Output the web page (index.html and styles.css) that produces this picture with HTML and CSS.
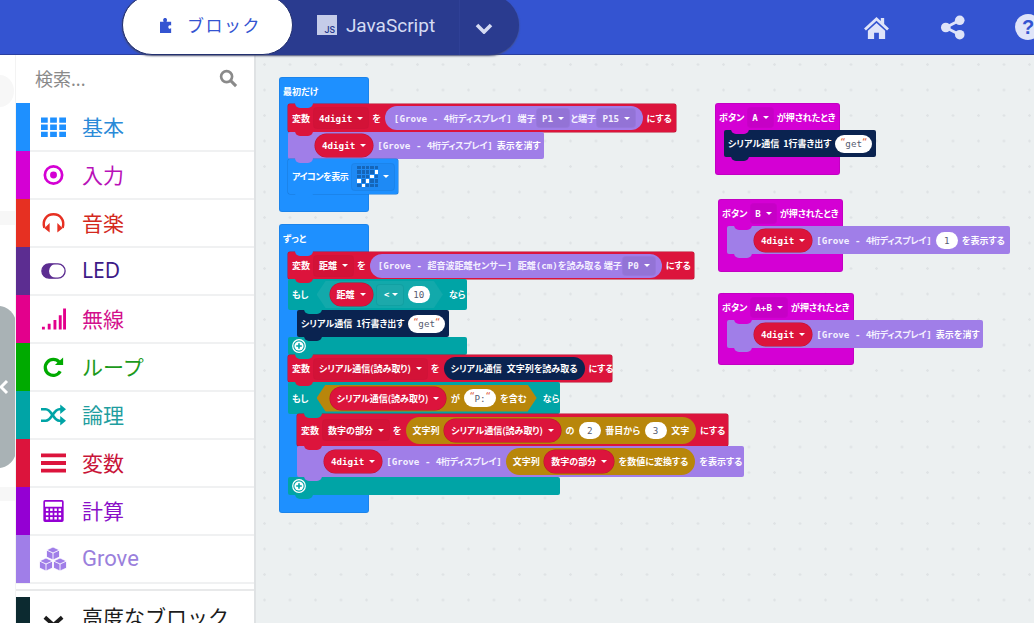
FILE: index.html
```html
<!DOCTYPE html>
<html lang="ja">
<head>
    <meta charset="UTF-8">
    <title>MakeCode ブロック</title>
    <link rel="stylesheet" href="styles.css">
</head>
<body>
    <header class="topbar">
        <div class="toggle">
            <div class="toggle-on">
                <svg class="puzzle" viewBox="0 0 14 16"><path d="M0 4h4C3 2.500 3.200 0 5.500 0S8 2.500 7 4h5v4c-2-1-3 0-3 1.500S10 12 12 11v5H0z"/></svg>
                <span>ブロック</span>
            </div>
            <div class="toggle-off">
                <span class="js-badge">JS</span>
                <span>JavaScript</span>
            </div>
            <div class="toggle-more">
                <svg viewBox="0 0 18 12"><path d="M2 3l7 7 7-7" fill="none" stroke="currentColor" stroke-width="3.600"/></svg>
            </div>
        </div>
        <div class="top-icons">
            <svg class="top-icon" viewBox="0 0 28 24"><path d="M14 1L1 13l2 2L14 5l11 10 2-2-5-4.600V2h-3.500v3.200zM5 15.500V24h6.500v-6.500h5V24H23v-8.500L14 7.200z"/></svg>
            <svg class="top-icon" viewBox="0 0 26 26"><circle cx="20" cy="5.500" r="5"/><circle cx="5.500" cy="13" r="5"/><circle cx="20" cy="20.500" r="5"/><path d="M5.500 13L20 5.500M5.500 13L20 20.500" stroke="currentColor" stroke-width="3"/></svg>
            <div class="help">?</div>
        </div>
    </header>

    <div class="main">
        <div class="edge">
            <div class="ghost ghost-a"></div>
            <div class="ghost ghost-b"></div>
            <div class="ghost ghost-c"></div>
            <div class="collapse">
                <svg viewBox="0 0 10 16"><path d="M8 2L2 8l6 6" fill="none" stroke="#fff" stroke-width="3"/></svg>
            </div>
        </div>

        <aside class="toolbox">
            <div class="search">
                <span>検索...</span>
                <svg viewBox="0 0 20 20"><circle cx="8" cy="8" r="5.800" fill="none" stroke="currentColor" stroke-width="2.800"/><path d="M12.500 12.500L18 18" stroke="currentColor" stroke-width="3.200"/></svg>
            </div>
            <div class="cat c-basic">
                <i></i>
                <svg viewBox="0 0 26 22"><path d="M0 1h7v5.500H0zM9.500 1h7v5.500h-7zM19 1h7v5.500h-7zM0 8.500h7V14H0zM9.500 8.500h7V14h-7zM19 8.500h7V14h-7zM0 16h7v5.500H0zM9.500 16h7v5.500h-7zM19 16h7v5.500h-7z"/></svg>
                <span>基本</span>
            </div>
            <div class="cat c-input">
                <i></i>
                <svg viewBox="0 0 26 22"><circle cx="13" cy="11" r="9" fill="none" stroke="currentColor" stroke-width="2.800"/><circle cx="13" cy="11" r="3.600"/></svg>
                <span>入力</span>
            </div>
            <div class="cat c-music">
                <i></i>
                <svg viewBox="0 0 26 22"><path d="M3.500 16C1 8 6 2 13 2s12 6 9.500 14" fill="none" stroke="currentColor" stroke-width="2.600"/><path d="M9 11v10L3.500 16.500zM17 11v10l5.500-4.500z"/></svg>
                <span>音楽</span>
            </div>
            <div class="cat c-led">
                <i></i>
                <svg viewBox="0 0 28 18"><rect x="1" y="1" width="26" height="16" rx="8" fill="#fff" stroke="currentColor" stroke-width="1.500"/><path d="M9 1a8 8 0 0 0 0 16h8a8 8 0 0 1 0-16z"/></svg>
                <span>LED</span>
            </div>
            <div class="cat c-radio">
                <i></i>
                <svg viewBox="0 0 26 22"><path d="M1 19h3v3H1zM7 16h3v6H7zM13 12h3v10h-3zM18.500 7h3v15h-3zM23 0h3v22h-3z"/></svg>
                <span>無線</span>
            </div>
            <div class="cat c-loop">
                <i></i>
                <svg viewBox="0 0 26 22"><path d="M20 15.500A8.300 8.300 0 1 1 19 6" fill="none" stroke="currentColor" stroke-width="3.400"/><path d="M14.500 9H23V1z"/></svg>
                <span>ループ</span>
            </div>
            <div class="cat c-logic">
                <i></i>
                <svg viewBox="0 0 26 22"><path d="M0 5h5c6 0 8 12 14 12h2M0 17h5c6 0 8-12 14-12h2" fill="none" stroke="currentColor" stroke-width="2.800"/><path d="M20 0l6 5-6 5zM20 12l6 5-6 5z"/></svg>
                <span>論理</span>
            </div>
            <div class="cat c-var">
                <i></i>
                <svg viewBox="0 0 26 22"><path d="M0 1h26v4H0zM0 9h26v4H0zM0 17h26v4H0z"/></svg>
                <span>変数</span>
            </div>
            <div class="cat c-math">
                <i></i>
                <svg viewBox="0 0 24 26"><path fill-rule="evenodd" d="M2 0h20a2 2 0 0 1 2 2v22a2 2 0 0 1-2 2H2a2 2 0 0 1-2-2V2a2 2 0 0 1 2-2zM2 2v6h20V2zM3 10v3h3v-3zM8 10v3h3v-3zM13 10v3h3v-3zM18 10v3h3v-3zM3 15v3h3v-3zM8 15v3h3v-3zM13 15v3h3v-3zM18 15v3h3v-3zM3 20v3h3v-3zM8 20v3h3v-3zM13 20v3h3v-3zM18 20v3h3v-3z"/></svg>
                <span>計算</span>
            </div>
            <div class="cat c-grove">
                <i></i>
                <svg class="wide" viewBox="0 0 30 26"><path d="M15 1l6.500 3v7L15 14l-6.500-3V4zM8 12l6.500 3v7L8 25l-6.500-3v-7zM22 12l6.500 3v7L22 25l-6.500-3v-7z" stroke="#fff" stroke-width=".8"/><path d="M8.500 4l6.500 3 6.500-3M1.500 15L8 18l6.500-3M15.500 15l6.500 3 6.500-3M15 7v7M8 18v7M22 18v7" fill="none" stroke="#fff" stroke-width=".9"/></svg>
                <span>Grove</span>
            </div>
            <div class="advanced">
                <i></i>
                <svg viewBox="0 0 26 22"><path d="M4 4l9 8 9-8" fill="none" stroke="currentColor" stroke-width="4"/></svg>
                <span>高度なブロック</span>
            </div>
        </aside>

        <section class="workspace">
            <!-- 最初だけ -->
            <div class="hat hat-blue stack-start">
                <div class="hat-title">最初だけ</div>
                <div class="blk red w-r1">
                    <span>変数</span><b class="drop mono">4digit<u></u></b><span>を</span>
                    <b class="pill purple-pill mono">[Grove - <em>4桁ディスプレイ</em>] <em>端子</em> <b class="drop-in">P1<u></u></b> <em>と端子</em> <b class="drop-in">P15<u></u></b></b>
                    <span>にする</span>
                </div>
                <div class="blk purple w-r2 pad-left">
                    <b class="pill red-pill mono">4digit<u></u></b><span class="mono soft">[Grove - <em>4桁ディスプレイ</em>]</span><span>表示を消す</span>
                </div>
                <div class="blk blue tall w-r3">
                    <span class="icon-label">アイコンを表示</span>
                    <div class="icon-field">
                        <div class="matrix">
                            <s></s><s></s><s></s><s></s><s></s>
                            <s></s><s></s><s></s><s></s><s class="on"></s>
                            <s></s><s></s><s></s><s class="on"></s><s></s>
                            <s class="on"></s><s></s><s class="on"></s><s></s><s></s>
                            <s></s><s class="on"></s><s></s><s></s><s></s>
                        </div>
                        <u></u>
                    </div>
                </div>
            </div>

            <!-- ずっと -->
            <div class="hat hat-blue stack-forever">
                <div class="hat-title title-forever">ずっと</div>
                <div class="blk red w-f1">
                    <span>変数</span><b class="drop">距離<u></u></b><span>を</span>
                    <b class="pill purple-pill mono">[Grove - <em>超音波距離センサー</em>] <em>距離</em>(cm)<em>を読み取る 端子</em> <b class="drop-in">P0<u></u></b></b>
                    <span>にする</span>
                </div>
                <div class="blk teal head w-f2">
                    <span>もし</span>
                    <div class="hex hex-teal">
                        <b class="pill red-pill">距離<u></u></b><b class="drop-teal">&lt;<u></u></b><b class="num mono">10</b>
                    </div>
                    <span class="then">なら</span>
                </div>
                <div class="blk navy inner w-f3">
                    <span>シリアル通信</span><span>1行書き出す</span><b class="str mono"><q></q>get<q></q></b>
                </div>
                <div class="blk teal foot w-f2">
                    <svg class="plus" viewBox="0 0 14 14"><circle cx="7" cy="7" r="6.300" fill="none" stroke="#fff" stroke-width="1.200"/><circle cx="7" cy="7" r="4.600" fill="#fff"/><path d="M7 4.200v5.600M4.200 7h5.600" stroke="#00a4a6" stroke-width="1.600"/></svg>
                </div>
                <div class="blk red w-f4">
                    <span>変数</span><b class="drop">シリアル通信(読み取り)<u></u></b><span>を</span>
                    <b class="pill navy-pill"><span>シリアル通信</span><span>文字列を読み取る</span></b>
                    <span>にする</span>
                </div>
                <div class="blk teal head head2 w-f5">
                    <span>もし</span>
                    <div class="hex hex-gold">
                        <b class="pill red-pill">シリアル通信(読み取り)<u></u></b><span>が</span><b class="str mono"><q></q>P:<q></q></b><span>を含む</span>
                    </div>
                    <span class="then">なら</span>
                </div>
                <div class="blk red inner w-f6">
                    <span>変数</span><b class="drop">数字の部分<u></u></b><span>を</span>
                    <b class="pill gold-pill">文字列<b class="pill red-pill">シリアル通信(読み取り)<u></u></b><span>の</span><b class="num mono">2</b><span>番目から</span><b class="num mono">3</b><span>文字</span></b>
                    <span>にする</span>
                </div>
                <div class="blk purple inner w-f7 pad-left">
                    <b class="pill red-pill mono">4digit<u></u></b><span class="mono soft">[Grove - <em>4桁ディスプレイ</em>]</span>
                    <b class="pill gold-pill">文字列<b class="pill red-pill">数字の部分<u></u></b><span>を数値に変換する</span></b>
                    <span class="show">を表示する</span>
                </div>
                <div class="blk teal foot w-f5">
                    <svg class="plus" viewBox="0 0 14 14"><circle cx="7" cy="7" r="6.300" fill="none" stroke="#fff" stroke-width="1.200"/><circle cx="7" cy="7" r="4.600" fill="#fff"/><path d="M7 4.200v5.600M4.200 7h5.600" stroke="#00a4a6" stroke-width="1.600"/></svg>
                </div>
            </div>

            <!-- ボタン -->
            <div class="hat hat-pink stack-a">
                <div class="hat-title"><span>ボタン</span><b class="drop-pink mono">A<u></u></b><span>が押されたとき</span></div>
                <div class="blk navy w-a">
                    <span>シリアル通信</span><span>1行書き出す</span><b class="str mono"><q></q>get<q></q></b>
                </div>
            </div>
            <div class="hat hat-pink stack-b">
                <div class="hat-title"><span>ボタン</span><b class="drop-pink mono">B<u></u></b><span>が押されたとき</span></div>
                <div class="blk purple w-b pad-left">
                    <b class="pill red-pill mono">4digit<u></u></b><span class="mono soft">[Grove - <em>4桁ディスプレイ</em>]</span><b class="num mono">1</b><span>を表示する</span>
                </div>
            </div>
            <div class="hat hat-pink stack-ab">
                <div class="hat-title"><span>ボタン</span><b class="drop-pink mono">A+B<u></u></b><span>が押されたとき</span></div>
                <div class="blk purple w-ab pad-left">
                    <b class="pill red-pill mono">4digit<u></u></b><span class="mono soft">[Grove - <em>4桁ディスプレイ</em>]</span><span>表示を消す</span>
                </div>
            </div>
        </section>
    </div>
</body>
</html>
```

FILE: styles.css
```css
* {
    box-sizing: border-box;
}
html, body {
    margin: 0;
    height: 623px;
    overflow: hidden;
}
body {
    width: 1034px;
    font-family: "Noto Sans", "Noto Sans CJK JP", sans-serif;
    background-color: #fff;
    display: flex;
    flex-direction: column;
}

/* header */
.topbar {
    height: 55px;
    flex: none;
    background-color: #3454d1;
    border-bottom: 1px solid #2a3f9f;
    display: flex;
    justify-content: space-between;
    position: relative;
    z-index: 3;
}
.toggle {
    width: 397px;
    height: 60px;
    margin: -5px 0 0 122px;
    background-color: #2a3b8f;
    border-radius: 30px;
    box-shadow: 0 1px 2px #444b70;
    display: flex;
    align-items: center;
    color: #d5dbf3;
}
.toggle-on {
    width: 171px;
    height: 60px;
    padding-left: 6px;
    background-color: #fff;
    color: #3454d1;
    border: 1px solid #22306f;
    border-radius: 30px;
    display: flex;
    align-items: center;
    justify-content: center;
    gap: 14px;
    font-size: 17px;
    letter-spacing: 1.500px;
}
.toggle-on span {
    margin-top: -2px;
}
.puzzle {
    width: 13px;
    height: 15px;
    fill: #3454d1;
}
.toggle-off {
    width: 166px;
    display: flex;
    align-items: center;
    justify-content: center;
    gap: 9px;
    font-family: Roboto, sans-serif;
    font-size: 19px;
}
.js-badge {
    width: 20px;
    height: 20px;
    background-color: #c5cce9;
    color: #2a3b8f;
    font-size: 9px;
    font-weight: 500;
    display: flex;
    align-items: flex-end;
    justify-content: flex-end;
    padding-right: 2px;
}
.toggle-more {
    flex: 1;
    height: 60px;
    border-left: 1px solid #2f4096;
    display: flex;
    align-items: center;
    padding: 6px 0 0 15px;
}
.toggle-more svg {
    width: 18px;
    height: 12px;
}
.top-icons {
    width: 171px;
    display: flex;
    align-items: center;
    color: #dfe4f9;
    gap: 50px;
    overflow: hidden;
}
.top-icon {
    flex: none;
    fill: currentColor;
}
.top-icon:nth-child(1) {
    width: 27px;
    height: 23px;
}
.top-icon:nth-child(2) {
    width: 26px;
    height: 25px;
}
.help {
    flex: none;
    width: 26px;
    height: 26px;
    border-radius: 50%;
    background-color: #dfe4f9;
    color: #3454d1;
    font-family: "Liberation Sans", sans-serif;
    font-weight: bold;
    font-size: 20px;
    line-height: 26px;
    text-align: center;
    margin-left: -1px;
}

/* main area */
.main {
    flex: 1;
    display: flex;
    min-height: 0;
}
.edge {
    width: 16px;
    flex: none;
    position: relative;
    background-color: #fff;
    overflow: hidden;
    border-right: 1px solid #f3f3f3;
}
.ghost {
    position: absolute;
    background-color: #f7f7f7;
}
.ghost-a {
    left: -14px;
    top: 20px;
    width: 28px;
    height: 32px;
    border-radius: 50%;
}
.ghost-b {
    left: 0;
    top: 156px;
    width: 15px;
    height: 14px;
}
.ghost-c {
    left: 0;
    top: 432px;
    width: 15px;
    height: 14px;
}
.collapse {
    position: absolute;
    left: -20px;
    top: 251px;
    width: 36px;
    height: 162px;
    background-color: #a9b2b5;
    border-radius: 0 18px 18px 0;
}
.collapse svg {
    position: absolute;
    left: 19px;
    top: 73px;
    width: 10px;
    height: 16px;
}

/* toolbox */
.toolbox {
    width: 240px;
    flex: none;
    background-color: #fff;
    border-right: 2px solid #dfe2e4;
    overflow: hidden;
}
.search {
    height: 49px;
    display: flex;
    align-items: center;
    justify-content: space-between;
    padding: 0 16px 3px 19px;
    color: #8a8a8a;
    font-size: 18px;
}
.search svg {
    width: 19px;
    height: 19px;
    fill: currentColor;
}
.cat {
    height: 48px;
    display: flex;
    align-items: center;
    border-bottom: 2px solid #f0f1f2;
    color: var(--cat);
    font-size: 21px;
}
.cat span {
    margin-top: -2px;
}
.cat i, .advanced i {
    width: 14px;
    height: 48px;
    flex: none;
    background-color: var(--cat);
}
.cat svg, .advanced svg {
    width: 25px;
    height: 22px;
    margin: 0 16px 0 11px;
    flex: none;
    fill: currentColor;
}
.cat svg.wide {
    width: 30px;
    height: 26px;
    margin: 0 14px 0 8px;
}
.c-basic { --cat: #1e90ff; }
.c-input { --cat: #d400d4; }
.c-music { --cat: #e63022; }
.c-led { --cat: #5c2d91; }
.c-radio { --cat: #e3008c; }
.c-loop { --cat: #00aa00; }
.c-logic { --cat: #00a4a6; }
.c-var { --cat: #dc143c; }
.c-math { --cat: #9400d3; }
.c-grove { --cat: #a07ee8; }
.c-led span { color: #3d1a87; }
.c-basic span { color: #2a8ad8; }
.c-input span { color: #b811b8; }
.c-music span { color: #d3281c; }
.c-radio span { color: #d3108c; }
.c-loop span { color: #1c9a1c; }
.c-logic span { color: #1f9ea0; }
.c-var span { color: #c81438; }
.c-math span { color: #8a10c8; }
.c-grove span { color: #9a80dc; font-family: Roboto, sans-serif; font-size: 22px; }
.advanced {
    height: 50px;
    margin-top: 5px;
    border-top: 2px solid #e8e9ea;
    padding-top: 6px;
    display: flex;
    align-items: flex-start;
    color: #1c1c1c;
    font-size: 21px;
    line-height: 30px;
}
.advanced i {
    --cat: #0c2a30;
}
.advanced svg {
    margin-top: 16px;
}
.advanced span {
    margin-top: 5px;
}

/* workspace */
.workspace {
    flex: 1;
    position: relative;
    overflow: hidden;
    background-color: #ecf0f1;
    background-image: radial-gradient(circle at 1.500px 1.500px, #dfe3e5 1px, transparent 1.500px);
    background-size: 25.500px 25.500px;
    background-position: 7px 8px;
}

/* blocks */
.hat {
    position: absolute;
    border-radius: 3px;
    border: 1px solid rgba(0, 0, 0, .08);
}
.hat-blue {
    background-color: #1e90ff;
    width: 90px;
}
.hat-pink {
    background-color: #d400d4;
}
.stack-start {
    left: 23px;
    top: 22px;
    height: 135px;
}
.stack-forever {
    left: 23px;
    top: 169px;
    height: 289px;
}
.stack-a {
    left: 459px;
    top: 48px;
    width: 125px;
    height: 72px;
}
.stack-b {
    left: 462px;
    top: 144px;
    width: 125px;
    height: 73px;
}
.stack-ab {
    left: 462px;
    top: 238px;
    width: 136px;
    height: 72px;
}
.hat-title {
    position: relative;
    height: 26px;
    padding-left: 3px;
    display: flex;
    align-items: center;
    gap: 4px;
    color: #fff;
    font-family: "Noto Sans CJK JP", sans-serif;
    font-feature-settings: "palt";
    font-size: 9px;
    font-weight: 700;
    white-space: nowrap;
}
.title-forever {
    height: 27px;
}
.hat-title::after {
    content: "";
    position: absolute;
    left: 15px;
    bottom: -4px;
    width: 18px;
    height: 5px;
    border-radius: 0 0 5px 5px;
    z-index: 2;
}
.hat-blue .hat-title::after { background-color: #1e90ff; }
.hat-pink .hat-title::after { background-color: #d400d4; }
.blk {
    position: relative;
    height: 28px;
    margin-left: 8px;
    padding-left: 4px;
    border-radius: 2px;
    display: flex;
    align-items: center;
    gap: 4px;
    color: #fff;
    font-family: "Noto Sans CJK JP", sans-serif;
    font-feature-settings: "palt";
    font-size: 9px;
    font-weight: 700;
    white-space: nowrap;
}
.blk::after {
    content: "";
    position: absolute;
    left: 7px;
    bottom: -4px;
    width: 18px;
    height: 5px;
    border-radius: 0 0 5px 5px;
    background-color: inherit;
    z-index: 1;
}
.head::after {
    left: 16px;
}
.red { background-color: #dc143c; box-shadow: 0 0 0 .5px #b8112f; }
.purple { background-color: #a07ee8; }
.blue { background-color: #1e90ff; box-shadow: 0 0 0 .5px #1878d8; }
.teal { background-color: #00a4a6; }
.navy { background-color: #0a2350; }
.tall { height: 35px; }
.inner { margin-left: 17px; }
.pad-left { padding-left: 27px; }
.w-r1 { width: 388px; }
.w-r1 .purple-pill { padding-left: 9px; }
.w-r1 .drop-in { margin: 0 1.500px; }
.w-r2 { width: 256px; height: 27px; }
.w-r3 { width: 110px; }
.w-f1 { width: 406px; height: 27px; }
.w-f2 { width: 179px; }
.head { height: 31px; }
.head2 { height: 32px; }
.foot { height: 18px; align-items: flex-start; }
.w-f3 { width: 152px; height: 27px; }
.w-f4 { width: 324px; height: 27px; }
.w-f5 { width: 272px; }
.w-f6 { width: 431px; height: 32px; }
.w-f7 { width: 447px; height: 31px; }
.w-a { width: 152px; height: 27px; }
.w-b { width: 283px; }
.w-ab { width: 256px; }
.icon-label {
    letter-spacing: -.5px;
}

.mono {
    font-family: "DejaVu Sans Mono", "Noto Sans CJK JP", monospace;
    font-size: 9.200px;
}
.mono em {
    font-family: "Noto Sans CJK JP", sans-serif;
    font-style: normal;
    font-size: 9px;
}
.soft {
    color: #f4f0ff;
}
.soft em {
    letter-spacing: -.3px;
}
.blk u, .hat-title u {
    display: inline-block;
    width: 0;
    height: 0;
    border-left: 3px solid transparent;
    border-right: 3px solid transparent;
    border-top: 3.500px solid #fff;
    margin-left: 5px;
}
.blk .pill > u, .icon-field u {
    margin-left: 0;
}
.drop, .drop-in, .drop-teal, .drop-pink {
    display: inline-flex;
    align-items: center;
    height: 20px;
    padding: 0 5px;
    border-radius: 3px;
    font-weight: 700;
    box-shadow: 0 0 0 1px rgba(0, 0, 0, .05);
}
.drop { background-color: #d31237; }
.drop-in {
    background-color: #9373d6;
    height: 18px;
    margin: 0 1px;
}
.drop-teal { background-color: #1ca9ab; padding: 0 5px 0 7px; }
.drop-teal u { margin-left: 3px; }
.drop-pink { background-color: #c600c6; height: 19px; padding: 0 4px; }
.pill {
    display: inline-flex;
    align-items: center;
    height: 23px;
    border-radius: 12px;
    padding: 0 7px;
    gap: 5px;
    font-weight: 700;
    white-space: pre;
}
.purple-pill {
    background-color: #a07ee8;
    color: #f4f0ff;
    gap: 0;
    padding: 0 6px 0 8px;
    height: 24px;
}
.red-pill {
    background-color: #dc143c;
    color: #fff;
    box-shadow: 0 0 0 .5px #b8112f;
}
.navy-pill {
    background-color: #0a2350;
}
.gold-pill {
    background-color: #b8860b;
    height: 27px;
    border-radius: 14px;
    gap: 4.500px;
}
.str, .num {
    display: inline-flex;
    align-items: center;
    justify-content: center;
    height: 17px;
    border-radius: 9px;
    background-color: #fff;
    color: #555b70;
    font-weight: 400;
    padding: 0 5px;
}
.str {
    height: 18px;
}
.num {
    min-width: 22px;
}
.str q {
    quotes: none;
    width: 5px;
    height: 10px;
    color: #e06040;
    font-size: 9px;
    line-height: 6px;
    text-align: center;
}
.str q::before {
    content: "\201C";
}
.hex {
    display: flex;
    align-items: center;
    height: 27px;
    gap: 4.500px;
    padding: 0 13px;
    margin-left: 4px;
    clip-path: polygon(9px 0, calc(100% - 9px) 0, 100% 50%, calc(100% - 9px) 100%, 9px 100%, 0 50%);
}
.hex-teal { background-color: #12a9ab; }
.hex-gold { background-color: #b8860b; padding-right: 10px; }
.then {
    margin-left: 2px;
}
.plus {
    width: 14px;
    height: 14px;
    margin-top: 2px;
}
.icon-field {
    display: flex;
    align-items: center;
    gap: 5px;
    height: 26px;
    padding: 0 5px;
    border-radius: 3px;
    background-color: #1e8af5;
    box-shadow: 0 0 0 1px rgba(0, 0, 0, .08);
}
.matrix {
    display: grid;
    grid-template-columns: repeat(5, 3.400px);
    grid-auto-rows: 3.400px;
    gap: 1px;
}
.matrix s {
    background-color: #1565b8;
    display: block;
}
.matrix s.on {
    background-color: #fff;
}
```
